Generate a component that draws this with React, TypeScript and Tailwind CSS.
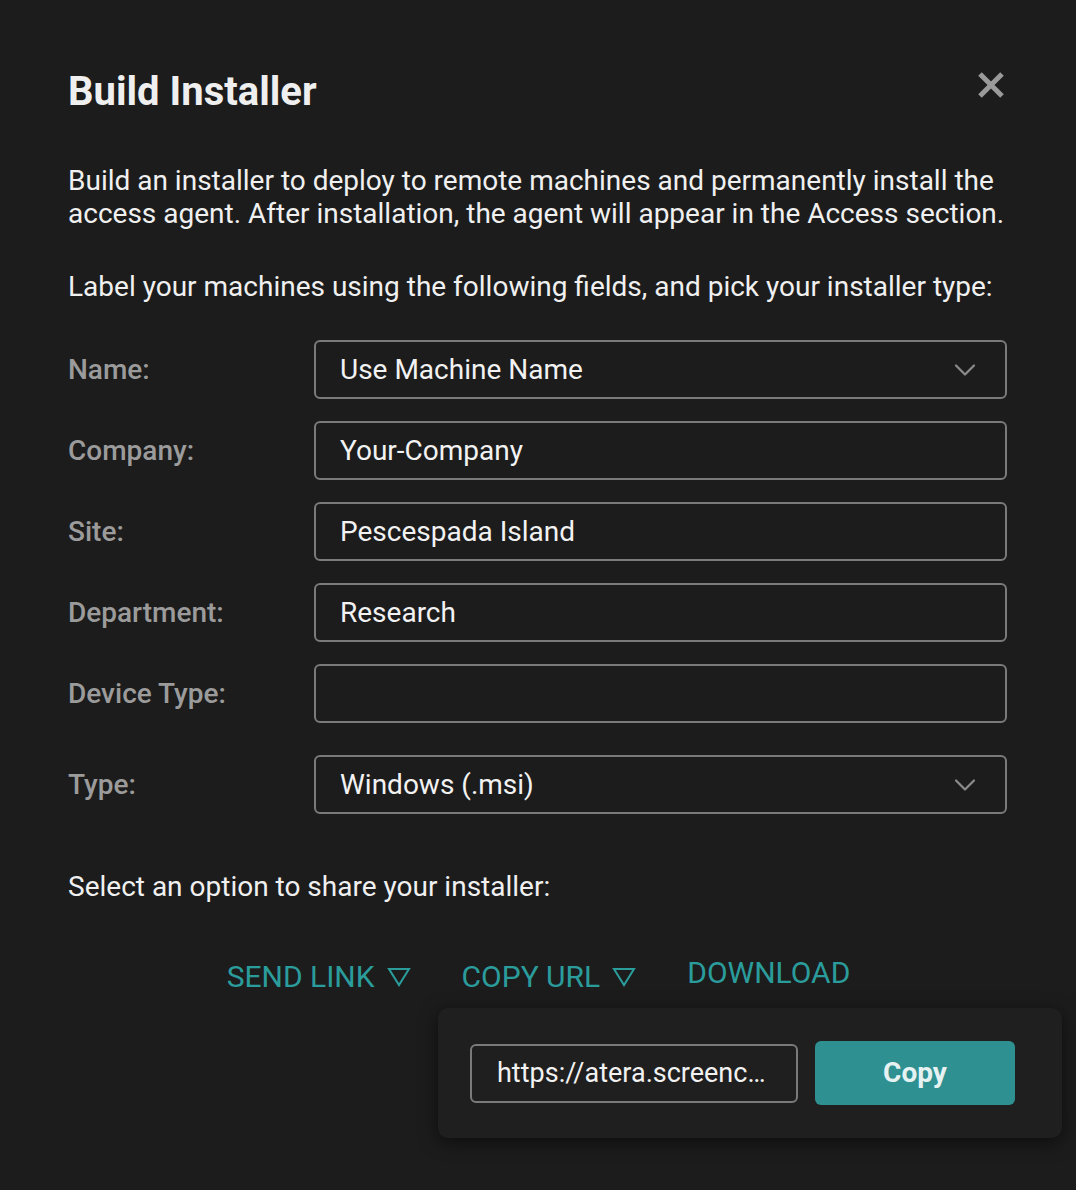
import { ChevronDown } from 'lucide-react';

const fields = [
  { label: 'Name:', value: 'Use Machine Name', select: true },
  { label: 'Company:', value: 'Your-Company' },
  { label: 'Site:', value: 'Pescespada Island' },
  { label: 'Department:', value: 'Research' },
  { label: 'Device Type:', value: '' },
];

function Triangle() {
  return (
    <svg width="24" height="20" viewBox="0 0 24 20" className="ml-3 inline-block">
      <path d="M2 2 H22 L12 18 Z" fill="none" stroke="currentColor" strokeWidth="2" strokeLinejoin="miter" />
    </svg>
  );
}

function Field({ value, select }: { value: string; select?: boolean }) {
  return (
    <div className="h-[59px] rounded-[6px] border-2 border-[#7a7a7a] flex items-center justify-between pl-[24px] pr-[22px] text-[28px] text-[#f2f2f2]">
      <span>{value}</span>
      {select && <ChevronDown className="w-[36px] h-[36px] text-[#8a8a8a]" strokeWidth={1.5} />}
    </div>
  );
}

export default function App() {
  return (
    <div className="min-h-[1190px] w-[1076px] bg-[#1c1c1c] text-[#f0f0f0] font-['Roboto',sans-serif] pl-[68px] pr-[69px] pt-[67px]">
      <div className="flex items-start justify-between">
        <h1 className="text-[40px] font-bold leading-[50px] text-[#efefef]">Build Installer</h1>
        <svg width="30" height="30" viewBox="0 0 30 30" className="mt-[3px] mr-[1px]">
          <path d="M4 4 L26 26 M26 4 L4 26" stroke="#9a9a9a" strokeWidth="5" />
        </svg>
      </div>

      <p className="mt-[47px] text-[28px] leading-[33px]">
        Build an installer to deploy to remote machines and permanently install the access agent. After installation, the agent will appear in the Access section.
      </p>
      <p className="mt-[40px] text-[28px] leading-[33px]">
        Label your machines using the following fields, and pick your installer type:
      </p>

      <div className="mt-[37px] flex flex-col gap-[22px]">
        {fields.map((f) => (
          <div key={f.label} className="grid grid-cols-[246px_1fr] items-center">
            <span className="text-[28px] font-medium text-[#9b9b9b]">{f.label}</span>
            <Field value={f.value} select={f.select} />
          </div>
        ))}
        <div className="grid grid-cols-[246px_1fr] items-center mt-[10px]">
          <span className="text-[28px] font-medium text-[#9b9b9b]">Type:</span>
          <Field value="Windows (.msi)" select />
        </div>
      </div>

      <p className="mt-[56px] text-[28px] leading-[33px]">Select an option to share your installer:</p>

      <div className="relative mt-[51px] flex justify-center gap-[51px] text-[30px] text-[#2b9c9c] pl-[2px]">
        <span className="flex items-center">SEND LINK<Triangle /></span>
        <span className="flex items-center">COPY URL<Triangle /></span>
        <span className="flex items-center -mt-[8px]">DOWNLOAD</span>

        <div className="absolute left-[370px] top-[54px] w-[624px] h-[130px] rounded-[10px] bg-[#1f1f1f] shadow-[0_4px_18px_rgba(0,0,0,0.55)] flex items-center pl-[32px] gap-[17px]">
          <div className="w-[328px] h-[59px] rounded-[6px] border-2 border-[#7a7a7a] flex items-center pl-[25px] text-[27px] text-[#f2f2f2]">
            https://atera.screenc…
          </div>
          <button className="w-[200px] h-[64px] rounded-[6px] bg-[#2e9090] text-[28px] font-bold text-[#e6f2f2]">
            Copy
          </button>
        </div>
      </div>
    </div>
  );
}
